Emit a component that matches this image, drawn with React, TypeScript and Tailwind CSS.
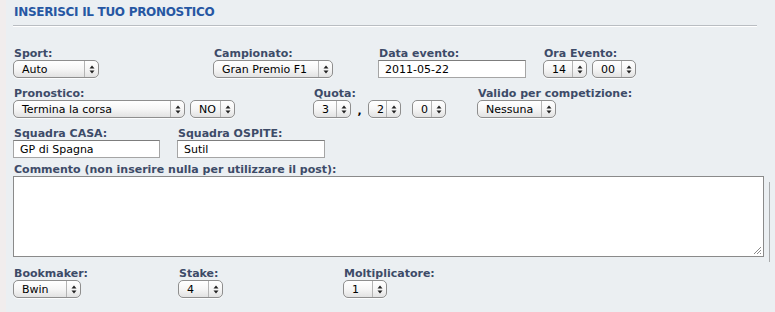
import React from "react";

const font = { fontFamily: '"DejaVu Sans", Verdana, sans-serif' };

function Arrows() {
  return (
    <svg width="6" height="9" viewBox="0 0 6 9">
      <path d="M3 0.5 L5.5 3.5 L0.5 3.5 Z" fill="#222" />
      <path d="M3 8.5 L5.5 5.5 L0.5 5.5 Z" fill="#222" />
    </svg>
  );
}

function Sel({ value, w }: { value: string; w: string }) {
  return (
    <div
      className={`${w} h-[18px] flex items-stretch rounded-[5px] border border-[#8e8e8e] bg-gradient-to-b from-white via-[#f6f6f6] to-[#e2e2e2] shadow-[0_1px_0_rgba(255,255,255,0.8)]`}
    >
      <div className="flex-1 flex items-center pl-[8px] text-[11px] leading-none text-black overflow-hidden whitespace-nowrap">
        {value}
      </div>
      <div className="w-[14px] flex items-center justify-center border-l border-[#b4b4b4]">
        <Arrows />
      </div>
    </div>
  );
}

function Inp({ value, w }: { value: string; w: string }) {
  return (
    <div
      className={`${w} h-[18px] flex items-center bg-white border border-[#a5a5a5] border-t-[#7d7d7d] pl-[6px] text-[11px] leading-none text-black whitespace-nowrap`}
    >
      {value}
    </div>
  );
}

function Label({ children }: { children: React.ReactNode }) {
  return (
    <div className="text-[11px] leading-[12px] font-bold text-[#3d4b68] pl-[1px] whitespace-nowrap">
      {children}
    </div>
  );
}

export default function App() {
  return (
    <div className="w-[775px] h-[312px] flex bg-[#ebeff2] overflow-hidden" style={font}>
      <div className="w-[6px] bg-[#f1eded] shrink-0" />
      <div className="flex-1 pl-[7px]">
        <div className="mt-[6px] w-[744px] border-b border-[#b9bdc2] pb-[6px] shadow-[0_1px_0_#ffffff]">
          <div className="text-[12px] leading-[13px] font-bold text-[#2657a3] pl-[1px] tracking-[-0.3px]">
            INSERISCI IL TUO PRONOSTICO
          </div>
        </div>

        {/* Row 1 */}
        <div className="flex mt-[22px]">
          <div className="w-[200px]">
            <Label>Sport:</Label>
            <Sel value="Auto" w="w-[86px]" />
          </div>
          <div className="w-[165px]">
            <Label>Campionato:</Label>
            <Sel value="Gran Premio F1" w="w-[120px]" />
          </div>
          <div className="w-[165px]">
            <Label>Data evento:</Label>
            <Inp value="2011-05-22" w="w-[148px]" />
          </div>
          <div>
            <Label>Ora Evento:</Label>
            <div className="flex gap-[5px]">
              <Sel value="14" w="w-[44px]" />
              <Sel value="00" w="w-[44px]" />
            </div>
          </div>
        </div>

        {/* Row 2 */}
        <div className="flex mt-[10px]">
          <div className="w-[300px]">
            <Label>Pronostico:</Label>
            <div className="flex gap-[5px]">
              <Sel value="Termina la corsa" w="w-[172px]" />
              <Sel value="NO" w="w-[45px]" />
            </div>
          </div>
          <div className="w-[164px]">
            <Label>Quota:</Label>
            <div className="flex items-center">
              <Sel value="3" w="w-[38px]" />
              <span className="w-[17px] text-center text-[11px] leading-none pt-[3px] font-bold text-black">,</span>
              <Sel value="2" w="w-[33px]" />
              <div className="w-[11px]" />
              <Sel value="0" w="w-[34px]" />
            </div>
          </div>
          <div>
            <Label>Valido per competizione:</Label>
            <Sel value="Nessuna" w="w-[79px]" />
          </div>
        </div>

        {/* Row 3 */}
        <div className="flex mt-[10px]">
          <div className="w-[164px]">
            <Label>Squadra CASA:</Label>
            <Inp value="GP di Spagna" w="w-[147px]" />
          </div>
          <div>
            <Label>Squadra OSPITE:</Label>
            <Inp value="Sutil" w="w-[148px]" />
          </div>
        </div>

        {/* Commento */}
        <div className="mt-[6px]">
          <Label>Commento (non inserire nulla per utilizzare il post):</Label>
          <div className="flex items-start h-[81px]">
            <div className="relative w-[751px] h-[81px] bg-white border border-[#8a8a8a]">
              <svg className="absolute right-[1px] bottom-[1px]" width="9" height="9" viewBox="0 0 9 9">
                <path d="M1 8 L8 1 M4 8 L8 4 M7 8 L8 7" stroke="#8a8a8a" strokeWidth="1" />
              </svg>
            </div>
            <div className="ml-[5px] mt-[6px] w-[1px] h-[80px] bg-[#a9abad]" />
          </div>
        </div>

        {/* Row 4 */}
        <div className="flex mt-[11px]">
          <div className="w-[165px]">
            <Label>Bookmaker:</Label>
            <Sel value="Bwin" w="w-[68px]" />
          </div>
          <div className="w-[165px]">
            <Label>Stake:</Label>
            <Sel value="4" w="w-[45px]" />
          </div>
          <div>
            <Label>Moltiplicatore:</Label>
            <Sel value="1" w="w-[44px]" />
          </div>
        </div>
      </div>
    </div>
  );
}
